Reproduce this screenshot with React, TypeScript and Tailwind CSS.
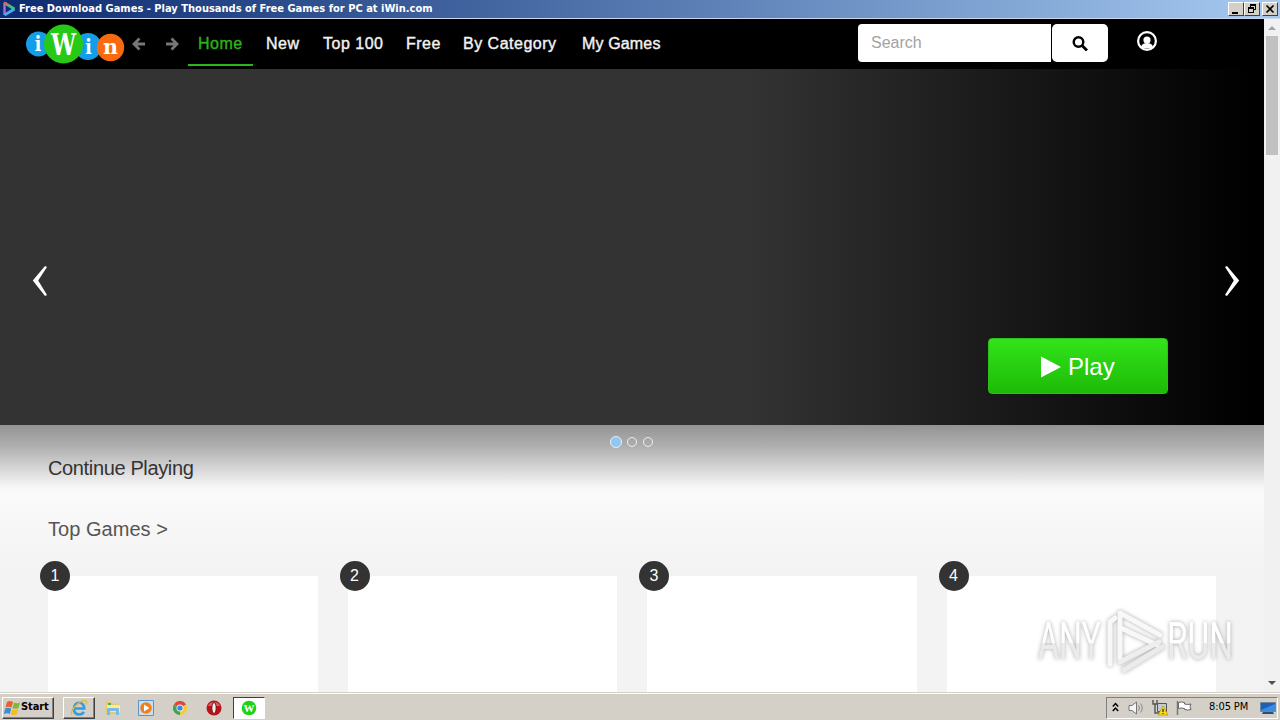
import type { ReactNode } from "react";

const navItems = ["Home", "New", "Top 100", "Free", "By Category", "My Games"];
const topGames = [1, 2, 3, 4];

function AnyRunIcon() {
  return (
    <svg width="14" height="16" viewBox="0 0 14 16" fill="none">
      <path d="M2.5 2v12" stroke="#a86fd0" strokeWidth="2.4" />
      <path d="M2.5 14 12.500 8" stroke="#4fa6ee" strokeWidth="2.8" />
      <path d="M2.5 2 12.500 8" stroke="#3fc08a" strokeWidth="2.8" />
      <path d="M2 1.500 6 4" stroke="#ee5a6a" strokeWidth="2.6" />
    </svg>
  );
}

function CaptionButton({ children }: { children: ReactNode }) {
  return (
    <div className="flex h-[14px] w-4 items-center justify-center border border-t-white border-r-[#404040] border-b-[#404040] border-l-white bg-[#d4d0c8]">
      {children}
    </div>
  );
}

function TitleBar() {
  return (
    <div className="flex h-[19px] items-center border-b border-[#c9d6ea] bg-linear-to-r from-[#0e2a70] to-[#a6caf0] pr-[2px] pl-[2px]">
      <AnyRunIcon />
      <span className="ml-[3px] text-[11px] leading-[18px] font-bold whitespace-nowrap text-white [font-family:'DejaVu_Sans_Condensed','DejaVu_Sans',sans-serif] tracking-[0.01px]">
        Free Download Games - Play Thousands of Free Games for PC at iWin.com
      </span>
      <div className="ml-auto flex">
        <CaptionButton>
          <svg width="14" height="12" viewBox="0 0 14 12">
            <path d="M3 9h6v2H3z" />
          </svg>
        </CaptionButton>
        <CaptionButton>
          <svg width="14" height="12" viewBox="0 0 14 12" fill="none" stroke="#000" shapeRendering="crispEdges">
            <path d="M5.5 4V1.5h5v5H9M5 2h6" />
            <path d="M3.5 4.5h5v5h-5zM3 5.5h6" />
          </svg>
        </CaptionButton>
        <div className="ml-[2px]">
          <CaptionButton>
            <svg width="14" height="12" viewBox="0 0 14 12">
              <path d="m3.5 2.5 7 7m0-7-7 7" stroke="#000" strokeWidth="1.7" />
            </svg>
          </CaptionButton>
        </div>
      </div>
    </div>
  );
}

function IWinLogo() {
  return (
    <svg width="100" height="42" viewBox="0 0 100 42" className="font-bold [font-family:'DejaVu_Serif',serif]">
      <circle cx="13.500" cy="20" r="12.500" fill="#159ee8" />
      <circle cx="63" cy="22.500" r="13.500" fill="#159ee8" />
      <circle cx="38.500" cy="20" r="19.500" fill="#25c916" />
      <circle cx="85.500" cy="23.500" r="13.700" fill="#f9690e" />
      <g fill="#fff" textAnchor="middle">
        <text x="13" y="27" fontSize="20" textLength="6.500" lengthAdjust="spacingAndGlyphs">i</text>
        <text x="38.500" y="31" fontSize="29" textLength="25" lengthAdjust="spacingAndGlyphs">W</text>
        <text x="63.500" y="30" fontSize="20" textLength="6.500" lengthAdjust="spacingAndGlyphs">i</text>
        <text x="85.500" y="30" fontSize="21" textLength="15" lengthAdjust="spacingAndGlyphs">n</text>
      </g>
    </svg>
  );
}

function HistoryArrow({ flip }: { flip?: boolean }) {
  return (
    <svg width="14" height="14" viewBox="0 0 14 14" className={flip ? "-scale-x-100" : ""}>
      <path d="M7.500 1.500 2 7l5.500 5.500M2.500 7H13" fill="none" stroke="#777" strokeWidth="2.800" />
    </svg>
  );
}

function Header() {
  return (
    <header className="flex h-[50px] shrink-0 bg-black">
      <div className="ml-[25px] flex w-[107px] pt-[5px]">
        <IWinLogo />
      </div>
      <div className="flex w-14 gap-[19px] pt-[18px]">
        <HistoryArrow />
        <HistoryArrow flip />
      </div>
      <nav className="grid h-[47px] w-[502px] grid-cols-[68px_57px_83px_57px_119px_118px] text-base tracking-[0.5px] text-[#f2f2f2]">
        {navItems.map((item, i) => (
          <a
            key={item}
            className={
              i === 0
                ? "mr-[3px] border-b-2 border-[#2bb518] pt-[13px] pl-[10px] text-[#2bb518] [-webkit-text-stroke:0.4px]"
                : "pt-[13px] pl-[10px] whitespace-nowrap [-webkit-text-stroke:0.4px] last:tracking-[0.15px]"
            }
          >
            {item}
          </a>
        ))}
      </nav>
      <div className="mt-[5px] ml-[168px] flex h-[38px]">
        <div className="w-[193px] rounded-l-[4px] bg-white pt-[7px] pl-[13px] text-base font-light text-[#a3a3a3]">
          Search
        </div>
        <div className="ml-px flex w-14 items-center justify-center rounded-[5px] bg-white">
          <svg width="16" height="16" viewBox="0 0 16 16" fill="none" stroke="#000">
            <circle cx="6.500" cy="7" r="4.800" strokeWidth="2.400" />
            <path d="m10 10.500 5 5" strokeWidth="2.800" />
          </svg>
        </div>
      </div>
      <svg width="20" height="20" viewBox="0 0 20 20" className="mt-3 ml-[29px]">
        <circle cx="10" cy="10" r="8.900" fill="none" stroke="#fff" strokeWidth="2.200" />
        <circle cx="10" cy="9" r="3.600" fill="#fff" />
        <path d="M4 15.500c1.200-2.600 3.400-3.400 6-3.400s4.800.8 6 3.400L14 17.500H6z" fill="#fff" />
      </svg>
    </header>
  );
}

function Chevron({ flip }: { flip?: boolean }) {
  return (
    <svg width="16" height="32" viewBox="0 0 16 32" className={flip ? "-scale-x-100" : ""}>
      <path d="M13 1 .8 15.500 13 31l2-1L6.200 15.500 15 2z" fill="#fff" />
    </svg>
  );
}

function Hero() {
  return (
    <section className="flex h-[356px] shrink-0 bg-[linear-gradient(to_right,#333_59%,#000_99%)] px-8">
      <div className="pt-[196px]">
        <Chevron />
      </div>
      <button className="mt-[269px] mr-[56px] ml-auto flex h-14 w-[180px] items-center rounded-[4px] border border-[#2cc01a] bg-linear-to-b from-[#33e31a] to-[#1cbb06] pt-px pl-[52px] text-2xl text-white">
        <svg width="20" height="22" viewBox="0 0 20 22">
          <path d="M0 .5 20 11 0 21.500z" fill="#fff" />
        </svg>
        <span className="ml-[7px]">Play</span>
      </button>
      <div className="-mr-[8px] pt-[196px]">
        <Chevron flip />
      </div>
    </section>
  );
}

function Content() {
  return (
    <section className="flex min-h-0 flex-1 flex-col bg-[linear-gradient(#929292_0px,#9e9e9e_8px,#b0b0b0_22px,#d3d3d3_42px,#f7f7f7_62px,#fafafa_72px,#f6f6f6_110px,#f3f3f3_150px)] px-12">
      <div className="flex h-[34px] items-center justify-center pr-px">
        <span className="size-3 rounded-full border border-[#e4f1fb] bg-[#93c5f0]" />
        <span className="ml-[5px] size-[10px] rounded-full border border-[#f0f0f0]" />
        <span className="ml-[6px] size-[10px] rounded-full border border-[#f0f0f0]" />
      </div>
      <h2 className="-mt-[5px] text-xl leading-7 tracking-[-0.36px] text-[#333]">Continue Playing</h2>
      <h2 className="mt-[33px] text-xl leading-7 tracking-[0.04px] text-[#555]">Top Games &gt;</h2>
      <div className="mt-[33px] grid flex-1 grid-cols-4 gap-[30px]">
        {topGames.map((rank) => (
          <div key={rank} className="bg-white">
            <span className="-mt-[15px] -ml-2 flex size-[30px] items-center justify-center rounded-full bg-[#333] text-base text-white">
              {rank}
            </span>
          </div>
        ))}
      </div>
    </section>
  );
}

function ScrollBar() {
  return (
    <div className="flex w-4 flex-col items-center bg-[#f1f1f1]">
      <svg width="16" height="17" viewBox="0 0 16 17">
        <path d="m4 11 4-4 4 4z" fill="#a3a3a3" />
      </svg>
      <div className="h-[119px] w-3 bg-[#c1c1c1]" />
      <svg width="16" height="17" viewBox="0 0 16 17" className="mt-auto">
        <path d="m4 6 4 4 4-4z" fill="#505050" />
      </svg>
    </div>
  );
}

function Watermark() {
  return (
    <svg
      width="214"
      height="74"
      viewBox="0 0 214 74"
      className="absolute top-[604px] left-[1032px] drop-shadow-[0_0_2px_#aaa]"
    >
      <defs>
        <linearGradient id="wm" x2="0" y2="1">
          <stop offset=".52" stopColor="#fff" />
          <stop offset=".52" stopColor="#ebebeb" />
        </linearGradient>
      </defs>
      <g fill="url(#wm)" className="[font-family:'Roboto',sans-serif]" fontSize="52">
        <text x="6" y="55" textLength="63" lengthAdjust="spacingAndGlyphs">ANY</text>
        <text x="135" y="55" textLength="66" lengthAdjust="spacingAndGlyphs">RUN</text>
      </g>
      <g fill="none" stroke="#f8f8f8" strokeWidth="5" strokeLinejoin="round" strokeLinecap="round">
        <path d="M83 14 78 18v42" />
        <path d="M88 54V9l40 22" />
        <path d="m89 24 36 17" />
        <path d="m88 58 39-20" stroke="#eee" />
        <path d="m92 66 38-23" stroke="#ebebeb" />
      </g>
    </svg>
  );
}

function Windows7Flag() {
  return (
    <svg width="17" height="16" viewBox="0 0 17 16">
      <path d="M3 2q3-2 6 0L7.500 7.500q-3-1.500-6 0z" fill="#e8612c" />
      <path d="M10 2.500q3 1.500 6 0L14.500 8q-3 1.500-6 0z" fill="#82b83a" />
      <path d="M1.200 8.500q3-1.500 6 0L5.800 14q-3-1.500-6 0z" fill="#3c8ed0" />
      <path d="M8.200 9q3 1.500 6 0l-1.500 5.500q-3 1.500-6 0z" fill="#f4bd25" />
    </svg>
  );
}

function IeIcon() {
  return (
    <svg width="18" height="18" viewBox="0 0 18 18" fill="none">
      <path d="M4.500 9.500h9.700c0-3.500-2-5.700-5-5.700S4 6 4 9.700s2 5.800 5.200 5.800c2.200 0 3.800-1 4.600-2.800" stroke="#2f9ee2" strokeWidth="2.600" />
      <path d="M2 16C-1 12 10 1 15 1.500c2.500.3 1.500 3 .8 4" stroke="#e0b93b" strokeWidth="1.300" />
    </svg>
  );
}

function ExplorerIcon() {
  return (
    <svg width="16" height="16" viewBox="0 0 16 16">
      <path d="M1 2h5l1 1.500h7V14H1z" fill="#e6ca69" />
      <path d="M2 5h13v7H2z" fill="#f8e9a6" />
      <path d="M3 3h3v2H3z" fill="#50ae5b" />
      <path d="M2 15V9q0-1 1-1h10q1 0 1 1v6h-3v-4H5v4z" fill="#78bce5" />
    </svg>
  );
}

function MediaPlayerIcon() {
  return (
    <svg width="16" height="16" viewBox="0 0 16 16">
      <path d="M.5.500h15v15H.5z" fill="#c8def2" stroke="#5b94c7" />
      <circle cx="8" cy="8" r="5.800" fill="#f08018" />
      <path d="m6 4.500 5.500 3.500L6 11.500z" fill="#fff" />
    </svg>
  );
}

function ChromeIcon() {
  return (
    <svg width="14" height="14" viewBox="0 0 14 14">
      <path d="M7 7 .9 3.500A7 7 0 0 1 13.100 3.500z" fill="#e0463a" />
      <path d="M7 7 .9 3.500A7 7 0 0 0 7 14z" fill="#3ba757" />
      <path d="M7 7 13.100 3.500A7 7 0 0 1 7 14z" fill="#f6cb35" />
      <circle cx="7" cy="7" r="3.500" fill="#eee" />
      <circle cx="7" cy="7" r="2.600" fill="#4285e0" />
    </svg>
  );
}

function OperaIcon() {
  return (
    <svg width="16" height="16" viewBox="0 0 16 16">
      <circle cx="8" cy="8" r="7.500" fill="#b71419" />
      <path d="M2 6a6.500 6.500 0 0 1 12 0z" fill="#db6060" />
      <ellipse cx="8" cy="8" rx="2.200" ry="5.500" fill="#eee" stroke="#790a0d" />
    </svg>
  );
}

function WinAppIcon() {
  return (
    <svg width="16" height="16" viewBox="0 0 16 16">
      <circle cx="8" cy="8" r="7.300" fill="#20d116" />
      <text x="8" y="12" fontSize="11" fill="#fff" textAnchor="middle" className="font-bold [font-family:'Liberation_Serif',serif]">
        W
      </text>
    </svg>
  );
}

function TrayIcons() {
  return (
    <div className="flex items-center">
      <svg width="7" height="11" viewBox="0 0 7 11" fill="none" stroke="#000" strokeWidth="1.500">
        <path d="m.8 4.500 2.700-3 2.700 3M.8 9l2.700-3 2.700 3" />
      </svg>
      <svg width="17" height="16" viewBox="0 0 17 16" fill="none" className="ml-[9px]">
        <path d="M1 5.500h3L8.500 2v12L4 10.500H1z" fill="#f4f4f4" stroke="#777" />
        <path d="M10.500 5.500q2 2.500 0 5M12.500 3.500q3.500 4.500 0 9" stroke="#888" />
      </svg>
      <svg width="17" height="17" viewBox="0 0 17 17" className="ml-[7px]">
        <path d="M5.500 4.500h9v8h-9z" fill="#c6cbd0" stroke="#555" />
        <path d="M1 1v4h4V1M3 5v9h5" fill="none" stroke="#555" strokeWidth="1.400" />
        <path d="m11 7 5 9H6z" fill="#f8dc19" stroke="#a98914" strokeWidth=".6" />
        <path d="M10.500 10h1v3h-1zm0 4h1v1h-1z" />
      </svg>
      <svg width="17" height="16" viewBox="0 0 17 16" className="ml-[7px]">
        <path d="M2.500 2.500q3-1 6 0v1.500q3 1 6.500 0-2 2.500 0 5.500-3.500 1-6.500 0V8.500q-3-1-6 0z" fill="#fff" stroke="#666" />
        <path d="M1.500 1v14" stroke="#777" strokeWidth="1.500" />
      </svg>
    </div>
  );
}

function Taskbar() {
  return (
    <footer className="flex h-7 items-center bg-[#d4d0c8] pl-[2px] shadow-[inset_0_1px_#d4d0c8,inset_0_2px_#fff] [font-family:'DejaVu_Sans_Condensed','DejaVu_Sans',sans-serif]">
      <div className="mt-[3px] flex h-[22px] w-[52px] items-center border border-t-white border-r-[#404040] border-b-[#404040] border-l-white pl-px shadow-[inset_-1px_-1px_#808080]">
        <Windows7Flag />
        <span className="text-[11px] font-bold tracking-[-0.1px]">Start</span>
      </div>
      <div className="mt-[3px] ml-[9px] flex h-[22px] w-8 items-center justify-center border border-t-white border-r-[#404040] border-b-[#404040] border-l-white shadow-[inset_-1px_-1px_#808080]">
        <IeIcon />
      </div>
      <div className="mt-[3px] flex">
        <div className="flex w-[34px] items-center justify-center pl-[2px]">
          <ExplorerIcon />
        </div>
        <div className="flex w-[34px] items-center justify-center">
          <MediaPlayerIcon />
        </div>
        <div className="flex w-[34px] items-center justify-center">
          <ChromeIcon />
        </div>
        <div className="flex w-[34px] items-center justify-center">
          <OperaIcon />
        </div>
        <div className="ml-[2px] flex h-[22px] w-8 items-center justify-center border border-t-[#404040] border-r-white border-b-white border-l-[#404040] bg-white">
          <WinAppIcon />
        </div>
      </div>
      <div className="mt-[3px] mr-[2px] ml-auto flex h-[22px] w-[172px] items-center border border-t-[#808080] border-r-white border-b-white border-l-[#808080] pl-[5px]">
        <TrayIcons />
        <span className="ml-[16px] w-[41px] text-[11px] tracking-[-0.1px] whitespace-nowrap">8:05 PM</span>
        <svg width="16" height="14" viewBox="0 0 16 14" className="ml-[10px]">
          <path d="M.5 1.500h15v9H.5z" fill="#1d61b7" stroke="#71869c" />
          <path d="m1 9 14-6v7H1z" fill="#3b8cdc" />
          <path d="M3 11h10l1 2H2z" fill="#334d6c" />
        </svg>
      </div>
    </footer>
  );
}

export default function App() {
  return (
    <div className="relative flex h-[720px] w-[1280px] flex-col overflow-hidden [font-family:'Liberation_Sans',Arial,sans-serif]">
      <TitleBar />
      <div className="flex min-h-0 flex-1">
        <main className="flex w-[1264px] flex-col">
          <Header />
          <Hero />
          <Content />
        </main>
        <ScrollBar />
      </div>
      <Taskbar />
      <Watermark />
    </div>
  );
}
